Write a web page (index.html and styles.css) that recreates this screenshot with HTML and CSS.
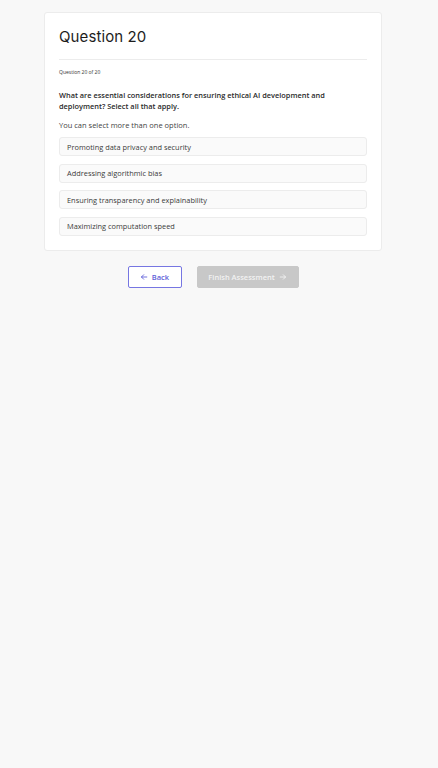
FILE: index.html
```html
<!DOCTYPE html>
<html lang="en">
<head>
<meta charset="utf-8">
<title>Question 20</title>
<link rel="stylesheet" href="styles.css">
</head>
<body>
<main class="page">
  <section class="card">
    <h1 class="card-title">Question 20</h1>
    <hr class="divider">
    <p class="progress">Question 20 of 20</p>
    <p class="prompt">What are essential considerations for ensuring ethical AI development and deployment? Select all that apply.</p>
    <p class="hint">You can select more than one option.</p>
    <ul class="options">
      <li class="option">Promoting data privacy and security</li>
      <li class="option">Addressing algorithmic bias</li>
      <li class="option">Ensuring transparency and explainability</li>
      <li class="option">Maximizing computation speed</li>
    </ul>
  </section>
  <nav class="actions">
    <button class="btn btn-back" type="button">
      <svg class="icon" viewBox="0 0 10 10" aria-hidden="true"><path d="M8.5 5H1.8M4.6 2.2 1.8 5l2.8 2.8" fill="none" stroke="currentColor" stroke-width="1.1" stroke-linecap="round" stroke-linejoin="round"/></svg>
      Back
    </button>
    <button class="btn btn-finish" type="button" disabled>
      Finish Assessment
      <svg class="icon" viewBox="0 0 10 10" aria-hidden="true"><path d="M1.5 5h6.7M5.4 2.2 8.2 5 5.4 7.8" fill="none" stroke="currentColor" stroke-width="1.1" stroke-linecap="round" stroke-linejoin="round"/></svg>
    </button>
  </nav>
</main>
</body>
</html>
```

FILE: styles.css
```css
html, body {
  margin: 0;
  padding: 0;
  background: #f8f8f8;
}

body {
  font-family: "Open Sans", "Liberation Sans", sans-serif;
  color: #2b2b2b;
}

.page {
  width: 338px;
  margin-left: 44px;
  padding-top: 12px;
}

.card {
  background: #ffffff;
  border: 1px solid #ececec;
  border-radius: 3px;
  padding: 14px 14px 14px;
  box-sizing: border-box;
}

.card-title {
  margin: 0;
  font-family: "Inter", "Liberation Sans", sans-serif;
  font-weight: 400;
  font-size: 15px;
  line-height: 20px;
  color: #1d1d1d;
  letter-spacing: 0.1px;
}

.divider {
  border: 0;
  border-top: 1px solid #ececec;
  margin: 12px 0 8px;
}

.progress {
  margin: 0;
  font-size: 5px;
  line-height: 8px;
  color: #333;
}

.prompt {
  margin: 14px 0 0;
  font-size: 7.4px;
  line-height: 11px;
  font-weight: 600;
  color: #2a2a2a;
}

.hint {
  margin: 8px 0 0;
  font-size: 7.5px;
  line-height: 10px;
  color: #444;
}

.options {
  list-style: none;
  margin: 7px 0 0;
  padding: 0;
  display: flex;
  flex-direction: column;
  gap: 7.5px;
}

.option {
  height: 19px;
  box-sizing: border-box;
  border: 1px solid #ececec;
  background: #fafafa;
  border-radius: 3px;
  padding: 0 7px;
  display: flex;
  align-items: center;
  font-size: 7.4px;
  color: #3a3a3a;
}

.actions {
  display: flex;
  justify-content: center;
  gap: 15px;
  margin-top: 15px;
}

.btn {
  height: 22px;
  box-sizing: border-box;
  border-radius: 2px;
  font-family: "Open Sans", "Liberation Sans", sans-serif;
  font-size: 7.5px;
  font-weight: 600;
  display: inline-flex;
  align-items: center;
  justify-content: center;
  gap: 4px;
  padding: 0;
  cursor: pointer;
}

.icon {
  width: 8px;
  height: 8px;
}

.btn-back {
  width: 54px;
  background: #ffffff;
  border: 1px solid #7676e2;
  color: #5f5fd8;
}

.btn-finish {
  width: 102px;
  background: #c8c8c8;
  border: 1px solid #c8c8c8;
  color: #f2f2f2;
  cursor: default;
}
```
